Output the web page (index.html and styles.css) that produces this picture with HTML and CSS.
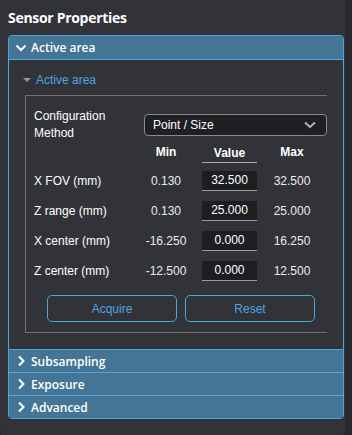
FILE: index.html
```html
<!DOCTYPE html>
<html lang="en">
<head>
    <meta charset="UTF-8">
    <meta name="viewport" content="width=device-width, initial-scale=1.0">
    <title>Sensor Properties</title>
    <link rel="stylesheet" href="styles.css">
</head>
<body>
    <div class="panel">
        <h1 class="title">Sensor Properties</h1>

        <div class="accordion">
            <div class="acc-head open">
                <svg class="chev" width="12" height="12" viewBox="0 0 12 12"><path d="M1.5 3.5 L6 8 L10.5 3.5" fill="none" stroke="#fff" stroke-width="2"/></svg>
                <span>Active area</span>
            </div>
            <div class="acc-body">
                <div class="toggle">
                    <span class="tri"></span>
                    <span>Active area</span>
                </div>
                <div class="group">
                    <div class="config">
                        <label class="config-label">Configuration<br>Method</label>
                        <div class="select">
                            <span>Point / Size</span>
                            <svg width="12" height="8" viewBox="0 0 12 8"><path d="M1 1.5 L6 6 L11 1.5" fill="none" stroke="#b8b8b8" stroke-width="1.8"/></svg>
                        </div>
                    </div>

                    <div class="grid">
                        <div></div>
                        <div class="col-head">Min</div>
                        <div class="col-head value-head">Value</div>
                        <div class="col-head">Max</div>

                        <div class="lbl">X FOV (mm)</div>
                        <div class="num">0.130</div>
                        <div class="cell"><div class="input">32.500</div></div>
                        <div class="num">32.500</div>

                        <div class="lbl">Z range (mm)</div>
                        <div class="num">0.130</div>
                        <div class="cell"><div class="input">25.000</div></div>
                        <div class="num">25.000</div>

                        <div class="lbl">X center (mm)</div>
                        <div class="num">-16.250</div>
                        <div class="cell"><div class="input">0.000</div></div>
                        <div class="num">16.250</div>

                        <div class="lbl">Z center (mm)</div>
                        <div class="num">-12.500</div>
                        <div class="cell"><div class="input">0.000</div></div>
                        <div class="num">12.500</div>
                    </div>

                    <div class="buttons">
                        <button type="button">Acquire</button>
                        <button type="button">Reset</button>
                    </div>
                </div>
            </div>
            <div class="acc-head">
                <svg class="chev" width="12" height="12" viewBox="0 0 12 12"><path d="M4 1.5 L8.5 6 L4 10.5" fill="none" stroke="#fff" stroke-width="2"/></svg>
                <span>Subsampling</span>
            </div>
            <div class="acc-head">
                <svg class="chev" width="12" height="12" viewBox="0 0 12 12"><path d="M4 1.5 L8.5 6 L4 10.5" fill="none" stroke="#fff" stroke-width="2"/></svg>
                <span>Exposure</span>
            </div>
            <div class="acc-head">
                <svg class="chev" width="12" height="12" viewBox="0 0 12 12"><path d="M4 1.5 L8.5 6 L4 10.5" fill="none" stroke="#fff" stroke-width="2"/></svg>
                <span>Advanced</span>
            </div>
        </div>
    </div>
</body>
</html>
```

FILE: styles.css
```css
body {
    margin: 0;
    background-color: #28292d;
    font-family: "Liberation Sans", Arial, sans-serif;
    color: white;
}
.panel {
    width: 345px;
    height: 440px;
    box-sizing: border-box;
    padding: 8px 1px 0 8px;
    background-color: #313338;
    border-radius: 0 0 10px 10px;
}
.title {
    margin: 0 0 7px 0;
    font-family: "Open Sans", sans-serif;
    font-size: 14px;
    font-weight: 700;
    letter-spacing: -0.3px;
    line-height: 20px;
}
.accordion {
    border: 1px solid #4ca6e0;
    border-radius: 4px;
    overflow: hidden;
}
.acc-head {
    display: flex;
    align-items: center;
    gap: 4px;
    height: 22px;
    padding-left: 6px;
    border-top: 1px solid #4ca6e0;
    background-color: #447594;
    font-family: "Open Sans", sans-serif;
    font-size: 12px;
    font-weight: 600;
}
.acc-head.open {
    height: 23px;
    border-top: none;
    border-bottom: 1px solid #4ca6e0;
}
.chev {
    flex: none;
}
.acc-body {
    padding: 12px 16px 16px 16px;
}
.toggle {
    display: flex;
    align-items: center;
    gap: 5px;
    margin: 0 0 7px -2px;
    line-height: 16px;
    font-size: 12px;
    color: #4ca6e6;
}
.tri {
    width: 0;
    height: 0;
    border-left: 4px solid transparent;
    border-right: 4px solid transparent;
    border-top: 4px solid #9a9a9a;
}
.group {
    border-top: 1px solid #707070;
    border-left: 1px solid #707070;
    border-bottom: 1px solid #707070;
    padding: 10px 0 10px 8px;
    font-size: 12px;
}
.config {
    display: flex;
    align-items: center;
    height: 38px;
}
.config-label {
    width: 110px;
    line-height: 17px;
}
.select {
    display: flex;
    align-items: center;
    justify-content: space-between;
    width: 183px;
    height: 22px;
    box-sizing: border-box;
    padding: 0 10px 0 8px;
    border: 1px solid #8a8a8a;
    border-radius: 4px;
    background-color: #1f2023;
}
.grid {
    display: grid;
    grid-template-columns: 96px 60px 55px 58px;
    grid-template-rows: 22px;
    grid-auto-rows: 30px;
    column-gap: 6px;
}
.col-head {
    align-self: start;
    font-weight: 700;
    text-align: center;
    line-height: 16px;
}
.value-head {
    line-height: 18px;
    border-bottom: 1px solid #a8a8a8;
}
.lbl, .num, .cell {
    display: flex;
    align-items: center;
}
.num {
    justify-content: center;
    color: #ececec;
}
.input {
    width: 100%;
    height: 19px;
    line-height: 19px;
    text-align: center;
    background-color: #1d1e21;
    border-bottom: 1px solid #9a9a9a;
}
.buttons {
    display: flex;
    gap: 8px;
    padding-left: 13px;
    margin-top: 9px;
}
button {
    width: 130px;
    height: 27px;
    border: 1px solid #4ca6e0;
    border-radius: 5px;
    background-color: transparent;
    color: #4ca6e6;
    font-family: "Liberation Sans", Arial, sans-serif;
    font-size: 12px;
    cursor: pointer;
}
```
